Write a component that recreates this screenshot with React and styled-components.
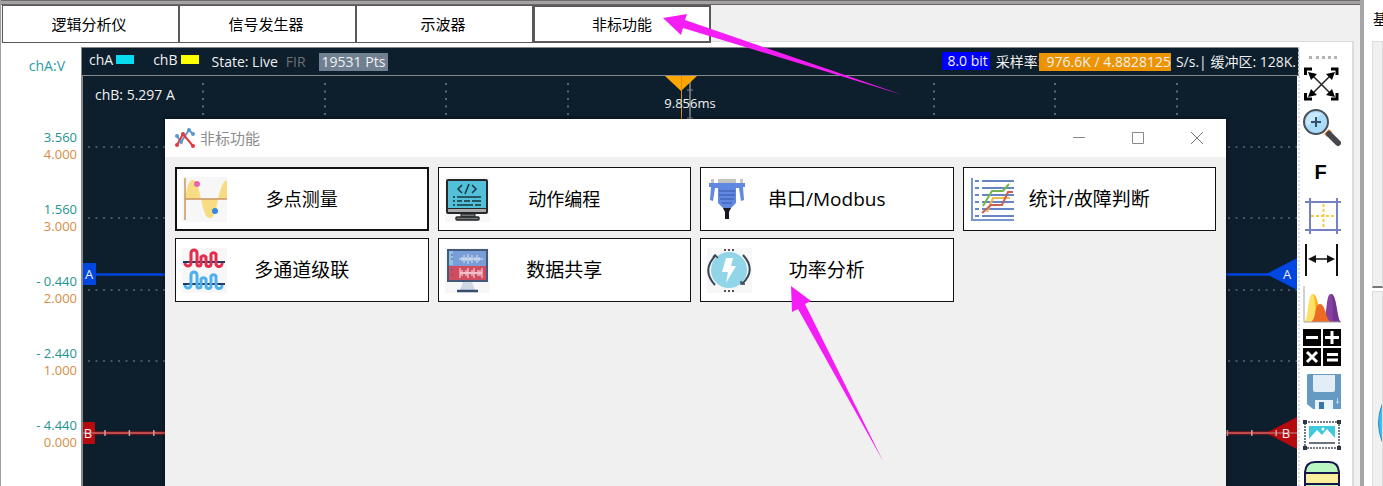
import styled, { createGlobalStyle } from 'styled-components';

const GlobalStyle = createGlobalStyle`
    * {
        box-sizing: border-box;
    }

    body {
        margin: 0;
        overflow: hidden;
        background: #f0f0f0;
        font-family: "Open Sans", "Noto Sans CJK SC", sans-serif;
    }

    button {
        font-family: inherit;
        padding: 0;
        margin: 0;
        border: none;
        background: none;
        color: inherit;
    }

    svg {
        display: block;
    }
`;

const Window = styled.div`
    position: relative;
    display: flex;
    height: 100vh;
    overflow: hidden;
`;

const Main = styled.main`
    flex: 1;
    min-width: 0;
    display: flex;
    flex-direction: column;
    border-left: 1px solid #a0a0a0;
`;

const TopEdge = styled.div`
    height: 5px;
    background: #a3a1a1;
    border-top: 1px solid #6e6c6c;
    border-bottom: 1px solid #696767;
`;

const Tabs = styled.nav`
    position: relative;
    z-index: 1;
    display: flex;
    height: 37px;
    padding-left: 1px;
    margin-right: 6px;
    border-bottom: 1px solid #dcdcdc;
`;

const Tab = styled.button`
    flex: none;
    width: ${({ $active }) => ($active ? 178 : 177)}px;
    height: 38px;
    padding-right: ${({ $active }) => ($active ? 0 : 3)}px;
    border: ${({ $active }) => ($active ? 2 : 1)}px solid #5a5858;
    background: #fff;
    color: #000;
    font-size: 15px;
    line-height: 20px;
`;

const Pane = styled.section`
    flex: 1;
    min-height: 0;
    display: flex;
    margin-right: 6px;
    padding-top: 5px;
    background: #fff;
    border-right: 2px solid #dcdcdc;
`;

const Axis = styled.div`
    width: 80px;
    flex: none;
    padding-right: 4px;
    text-align: right;
`;

const AxisName = styled.div`
    height: 82px;
    padding: 9px 12px 0 0;
    color: #2a9d9d;
    font-size: 14px;
    line-height: 20px;
`;

const AxisMark = styled.div`
    height: 72px;
    font-size: 13px;
    line-height: 17px;
    color: #d68b45;

    span {
        display: block;
        color: #1f9292;
    }
`;

const Scope = styled.div`
    flex: 1;
    min-width: 0;
    display: flex;
    flex-direction: column;
`;

const ScopeHeader = styled.header`
    display: flex;
    align-items: center;
    height: 29px;
    padding: 0 2px 0 7px;
    background: #0d1e2d;
    border: 1px solid #85898c;
    color: #f0f0f0;
    font-size: 14px;
    line-height: 18px;
    white-space: nowrap;
`;

const Channel = styled.span`
    display: flex;
    align-items: center;
    padding-bottom: 4px;
    margin-right: ${({ $last }) => ($last ? 13 : 19)}px;
`;

const Swatch = styled.i`
    width: 18px;
    height: 9px;
    margin: 0 0 1px 3px;
    background: ${({ $color }) => $color};
`;

const State = styled.span`
    margin-right: 8px;
    color: ${({ $dim }) => ($dim ? '#6d7073' : '#f0f0f0')};
`;

const Points = styled.span`
    padding: 0 3px;
    margin-left: 5px;
    background: #708090;
`;

const Rate = styled.div`
    display: flex;
    align-items: center;
    margin-left: auto;
`;

const Bits = styled.span`
    padding: 0 2px 0 5px;
    margin: 0 6px 2px 0;
    background: #0000ff;
`;

const RateValue = styled.span`
    padding: 0 0 0 8px;
    margin: 0 5px 0 -3px;
    background: #eb9400;
`;

const Plot = styled.div`
    flex: 1;
    min-height: 0;
    margin-right: 2px;
    overflow: hidden;
    background: #0d1e2d;
    border-left: 2px solid #85898c;
`;

const Toolbar = styled.div`
    flex: none;
    width: 54px;
    margin-left: -1px;
    padding: 9px 0 0 3px;
    border-left: 2px dotted #dedede;
    display: flex;
    flex-direction: column;
    gap: 6px;
`;

const Grip = styled.div`
    flex: none;
    width: 28px;
    height: 3px;
    margin-left: 6px;
    border-top: 3px dotted #b4b4b4;
`;

const Tool = styled.button`
    flex: none;
    width: 38px;
    height: 38px;
    padding-right: ${({ $text }) => ($text ? 3 : 0)}px;
    color: #000;
    font-size: 20px;
    font-weight: 700;
    font-family: "Liberation Sans", sans-serif;
`;

const Side = styled.aside`
    flex: none;
    width: 23px;
    overflow: hidden;
    background: #fff;
    border-left: 4px solid #a6a6a6;
    display: flex;
    flex-direction: column;
`;

const SideTitle = styled.div`
    flex: none;
    height: 41px;
    padding: 10px 0 0 9px;
    font-size: 14px;
    line-height: 18px;
`;

const SideBox = styled.div`
    flex: none;
    height: 247px;
    margin: 0 0 3px 8px;
    overflow: hidden;
    background: #f0f0f0;
    border: 1px solid #dcdcdc;
    border-bottom: 2px solid #777;
`;

const Dial = styled.div`
    width: 100px;
    height: 100px;
    margin: 81px 0 0 5px;
    border-radius: 50%;
    background: #35c0fa;
    border: 1px solid #3a87a8;
`;

const Dialog = styled.section`
    position: absolute;
    top: 119px;
    left: 165px;
    right: 157px;
    bottom: 0;
    background: #f0f0f0;
    box-shadow: 0 0 5px rgba(0, 0, 0, 0.5);
`;

const TitleBar = styled.header`
    display: flex;
    align-items: center;
    height: 38px;
    padding-left: 10px;
    background: #fff;
`;

const Title = styled.h1`
    flex: 1;
    margin: 0 0 0 5px;
    color: #8c8c8c;
    font-size: 15px;
    line-height: 20px;
    font-weight: 400;
`;

const WindowButton = styled.button`
    display: grid;
    place-items: center;
    width: 59px;
    height: 38px;
`;

const Functions = styled.div`
    display: grid;
    grid-template-columns: repeat(4, 1fr);
    gap: 7px 9px;
    padding: 10px;
`;

const FunctionButton = styled.button`
    display: grid;
    grid-template-columns: 45px 1fr 45px;
    align-items: center;
    height: 64px;
    padding: 0 ${({ $selected }) => ($selected ? 5 : 6)}px;
    background: #fff;
    border: ${({ $selected }) => ($selected ? 2 : 1)}px solid #111;
    color: #000;
    font-size: ${({ $small }) => ($small ? 18 : 19)}px;
    line-height: 26px;
    white-space: nowrap;
`;

const Pointers = styled.svg`
    position: absolute;
    z-index: 2;
    top: 0;
    left: 0;
    pointer-events: none;
`;

const marks = [
    ['3.560', '4.000'],
    ['1.560', '3.000'],
    ['- 0.440', '2.000'],
    ['- 2.440', '1.000'],
    ['- 4.440', '0.000'],
];

const columns = [120, 242, 363, 485, 851, 972, 1094];
const rows = [71, 142, 214, 285];
const ticks = Array.from({ length: 49 }, (_, i) => 22 + i * 24.4);

const Waveforms = () => (
    <svg width="100%" height="410" viewBox="0 0 1214 410" preserveAspectRatio="xMaxYMin slice">
        <g stroke="#5c6973" strokeWidth="2" strokeDasharray="2 5.5">
            {columns.map((x) => (
                <path key={x} d={`M${x} 7V410`} />
            ))}
            {rows.map((y) => (
                <path key={y} d={`M5 ${y}H1214`} strokeWidth="1.5" />
            ))}
        </g>
        <path d="M607 0V410" stroke="#85898c" strokeWidth="1.5" />
        <path d="M604 14H610M604 42H610" stroke="#85898c" />
        <path d="M582 0H614L598 15Z" fill="#ffa500" />
        <path d="M598.500 0V410" stroke="#d98f0c" />
        <path d="M0 198.500H1190" stroke="#0046e0" strokeWidth="2.500" />
        <path d="M0 187H13V209H0Z M1183 198L1214 182V214Z" fill="#0046e0" />
        <path d="M0 357H1190" stroke="#b50b0e" strokeWidth="3" />
        <path d="M0 346H12V368H0Z M1183 357L1214 341V373Z" fill="#b50b0e" />
        <path d="M0 357H1214" stroke="#c98d8f" strokeWidth="1" />
        <path d={ticks.map((x) => `M${x} 354V360`).join('')} stroke="#b9a9ab" strokeWidth="1.5" />
        <g fill="#f0f0f0" fontSize="13">
            <text x="607" y="32" textAnchor="middle">9.856ms</text>
            <text x="12" y="24" fontSize="14">chB: 5.297 A</text>
            <text x="6" y="203" textAnchor="middle">A</text>
            <text x="5" y="362" textAnchor="middle">B</text>
            <text x="1204" y="203" textAnchor="middle">A</text>
            <text x="1203" y="362" textAnchor="middle">B</text>
        </g>
    </svg>
);

const ToolSvg = ({ children }) => (
    <svg width="38" height="38" viewBox="0 0 38 38" fill="none">
        {children}
    </svg>
);

const ExpandIcon = () => (
    <ToolSvg>
        <path d="M2.500 10V4H9M28 4H34V10M34 28V34H28M9 34H2.500V28" stroke="#000" strokeWidth="3" />
        <path d="M8 9L29 30M29 9L8 30" stroke="#222" strokeWidth="1.500" />
        <path d="M5 7L14 9L8 15ZM32 7L23 9L29 15ZM5 32L14 30L8 24ZM32 32L23 30L29 24Z" fill="#000" />
    </ToolSvg>
);

const MagnifierIcon = () => (
    <ToolSvg>
        <path d="M21 25L26 20L29 23L24 28Z" fill="#f58a2c" />
        <path d="M26 25L35 34" stroke="#45454b" strokeWidth="6" strokeLinecap="round" />
        <circle cx="13" cy="13" r="12" fill="#a9dcf8" stroke="#4b5059" strokeWidth="2" />
        <path d="M4 17A10 10 0 0 1 19 5Z" fill="#c9e9fb" />
        <path d="M13 8V18M8 13H18" stroke="#35506a" strokeWidth="2" />
    </ToolSvg>
);

const GridIcon = () => (
    <ToolSvg>
        <path d="M7 1V37M34 1V37M2 5H38M2 33H38" stroke="#7482c4" strokeWidth="2" />
        <path d="M20.500 7V31M8 19H33" stroke="#f0cc45" strokeWidth="2" strokeDasharray="3 2" />
    </ToolSvg>
);

const SpanIcon = () => (
    <ToolSvg>
        <path d="M3 3V35M34 3V35" stroke="#111" strokeWidth="2" />
        <path d="M8 18H30" stroke="#111" strokeWidth="1.500" />
        <path d="M5 18L13 14V22ZM32 18L24 14V22Z" fill="#111" />
    </ToolSvg>
);

const PeaksIcon = () => (
    <ToolSvg>
        <path d="M1 37C6 35 4 9 10 9S16 36 21 37Z" fill="#ffe066" />
        <path d="M10 9C15 9 17 36 21 37H13C12 25 13 15 10 9Z" fill="#fbb315" />
        <path d="M19 37C25 34 22 9 28 9S34 35 38 37Z" fill="#87409f" />
        <path d="M28 9C34 9 33 35 38 37H30C29 25 31 15 28 9Z" fill="#6f3590" />
        <path d="M8 37C14 33 11 19 17 19S22 34 28 37Z" fill="#ee6b25" />
        <path d="M1 1V37H38" stroke="#a4a4a4" />
    </ToolSvg>
);

const MathIcon = () => (
    <ToolSvg>
        <path d="M0 0H18V17H0ZM20 0H38V17H20ZM0 19H18V37H0ZM20 19H38V37H20Z" fill="#050505" />
        <path
            d="M3 8.500H15M22 8.500H36M29 2V15M4 23L14 33M14 23L4 33M24 25.500H35M24 31H35"
            stroke="#fff"
            strokeWidth="3"
        />
    </ToolSvg>
);

const SaveIcon = () => (
    <ToolSvg>
        <path d="M5 1H38V36H10L4 31V2Z" fill="#659bc3" />
        <path d="M10 2H32V17Q32 19 30 19H12Q10 19 10 17Z" fill="#e2edf5" />
        <path d="M12 27H30V36H12Z" fill="#eaf3fb" />
        <path d="M16 29H21V36H16Z" fill="#3774a7" />
        <path d="M34.500 25V31M33 29H36" stroke="#c1d9e9" />
    </ToolSvg>
);

const PictureIcon = () => (
    <ToolSvg>
        <rect x="2" y="5" width="34" height="26" stroke="#49505b" strokeWidth="1.500" strokeDasharray="2 1" />
        <path d="M0 3H4V7H0ZM34 3H38V7H34ZM0 29H4V33H0ZM34 29H38V33H34Z" fill="#2d3644" />
        <path d="M6 9H32V22H6Z" fill="#3fc9de" />
        <path d="M6 22L14 13L19 18L24 12L32 21V23H6Z" fill="#fff" />
        <circle cx="20" cy="12" r="1.500" fill="#fff" />
        <path d="M6 26H32" stroke="#6b747c" strokeWidth="2" />
    </ToolSvg>
);

const LayersIcon = () => (
    <ToolSvg>
        <path d="M2 38V11Q3 1 12 1H26Q35 1 36 11V38Z" fill="#b9f7c1" />
        <path d="M2 12H36V23H2Z" fill="#f9ee9b" />
        <path d="M2 38V11Q3 1 12 1H26Q35 1 36 11V38M2 12H36M2 23H36" stroke="#14154b" strokeWidth="2" />
    </ToolSvg>
);

const FuncSvg = ({ plain, children }) => (
    <svg width="45" height="45" viewBox="0 0 45 45" fill="none">
        {!plain && <path d="M0 0H45V45H0Z" fill="#f7f7f7" />}
        {children}
    </svg>
);

const MeasureIcon = () => (
    <FuncSvg>
        <path
            d="M3 22C5 9 7 3 11 3S17 12 19 22C22 36 24 41 28 41S34 34 36 22C39 10 41 4 45 3V22Z"
            fill="#f8dc83"
        />
        <path d="M3 1V43M3 22H45" stroke="#cc9560" strokeWidth="1.500" />
        <circle cx="15" cy="7" r="3" fill="#ee62ad" />
        <circle cx="33" cy="34" r="3" fill="#3688df" />
    </FuncSvg>
);

const CodeIcon = () => (
    <FuncSvg>
        <rect x="2" y="3" width="40" height="33" rx="1" fill="#52c0d9" stroke="#25282a" strokeWidth="2" />
        <path d="M3 32H41V35H3Z" fill="#aaa" />
        <path d="M3 31.500H41" stroke="#25282a" />
        <path d="M17 8L13 12L17 16M27 8L31 12L27 16M24 7L20 17" stroke="#17353e" strokeWidth="1.500" />
        <path
            d="M8 20H10M12 20H36M8 24H10M12 24H17M19 24H25M27 24H36M8 28H10M12 28H28M30 28H36"
            stroke="#17353e"
            strokeWidth="1.500"
        />
        <path d="M16 37H30V40H16Z" fill="#777" stroke="#25282a" />
        <rect x="11" y="40" width="23" height="3" rx="1" fill="#777" stroke="#25282a" strokeWidth="1.500" />
    </FuncSvg>
);

const SerialIcon = () => (
    <FuncSvg plain>
        <path d="M11 2H29V6H11ZM4 2H7V6H4ZM33 2H36V6H33Z" fill="#c3c5c2" />
        <path d="M2 6H38V10H36L37 23L34 24L32 11H29V26L23 32H17L11 26V11H8L6 24L3 23L4 10H2Z" fill="#6088e0" />
        <path d="M12 14H28M12 18H28M13 22H27M15 26H25" stroke="#4668b6" strokeWidth="1.500" />
        <path d="M16 31H24L22 35V42H18V35Z" fill="#17191e" />
    </FuncSvg>
);

const StatsIcon = () => (
    <FuncSvg plain>
        <path d="M2 1V43H44" stroke="#7896cf" strokeWidth="2" />
        <path
            d="M5 4H9M12 4H44M5 11H9M12 11H44M5 18H9M12 18H44M5 25H9M12 25H44M5 32H9M12 32H44M5 39H9M12 39H44"
            stroke="#6785c5"
            strokeWidth="2"
        />
        <path d="M13 29L22 14H33L39 7" stroke="#74b54b" strokeWidth="2" />
        <path d="M17 35L23 21H40" stroke="#eebb4b" strokeWidth="2" />
        <path d="M12 36L21 28H32L38 15H43" stroke="#c96058" strokeWidth="2" />
    </FuncSvg>
);

const wave = 'M3 15A3 3 0 0 0 9 15V5A3 3 0 0 1 15 5V16A2 2 0 0 0 19 16V9A3 3 0 0 1 24 9V16A2 2 0 0 0 29 16V6A3 3 0 0 1 34 6V16A3 3 0 0 0 40 15';

const CascadeIcon = () => (
    <FuncSvg>
        <path d="M1 14H43M1 36H43" stroke="#243a60" strokeWidth="2" />
        <path d={wave} stroke="#e22d4d" strokeWidth="3" />
        <path d={wave} transform="translate(0 22)" stroke="#4eafee" strokeWidth="3" />
    </FuncSvg>
);

const ShareIcon = () => (
    <FuncSvg>
        <path d="M18 34H27L30 42H15Z" fill="#ced8e5" />
        <path d="M3 2H42V18H3Z" fill="#789dd7" />
        <path d="M3 18H42V34H3Z" fill="#d04d60" />
        <path d="M3 3H8V17H3Z" fill="#8fc0e6" />
        <rect x="3" y="2" width="39" height="31" stroke="#465979" strokeWidth="2" />
        <path d="M14 11H38M17 9V13M19 7V15M21 9V13M23 6V16M25 9V13M27 7V15M30 9V13M32 7V15M34 9V13" stroke="#dce6f5" />
        <path d="M15 20V30M17 22V28M19 24V26M21 22V28M23 20V30M25 24V26M27 22V28M29 20V30M31 24V26M33 22V28M35 22V28M37 20V30" stroke="#fbe9ed" />
        <path d="M15 25H37" stroke="#fbe9ed" />
        <path d="M7 6V8M7 10V12M7 21V23M7 26V28" stroke="#49628c" />
        <path d="M12 43H33" stroke="#374d70" strokeWidth="2.500" />
    </FuncSvg>
);

const PowerIcon = () => (
    <FuncSvg>
        <circle cx="22" cy="22" r="18" fill="#91d5e8" />
        <path d="M9 7Q-6 22 8 37M36 7Q50 22 35 36" stroke="#3a4657" strokeWidth="2" />
        <path d="M6 9L8 7L11 10M34 33V36H38" stroke="#3a4657" strokeWidth="1.500" />
        <path d="M17 2H27M17 43H27" stroke="#555" strokeWidth="2" strokeDasharray="2 2" />
        <path d="M19 10H26L24 18H29L19 35L21 24H15Z" fill="#fff" />
    </FuncSvg>
);

const AppIcon = () => (
    <svg width="20" height="20" viewBox="0 0 20 20" fill="none">
        <path d="M2 8L6 14L14 2L18 6" stroke="#5a97cb" strokeWidth="2" />
        <path d="M2 17L8 6L18 18" stroke="#e0393e" strokeWidth="2" />
        <g fill="#5a97cb">
            <circle cx="2" cy="8" r="2" />
            <circle cx="6" cy="14" r="2" />
            <circle cx="14" cy="2" r="2" />
            <circle cx="18" cy="6" r="2" />
        </g>
        <g fill="#e0393e">
            <circle cx="2" cy="17" r="2" />
            <circle cx="8" cy="6" r="2" />
            <circle cx="18" cy="18" r="2" />
        </g>
    </svg>
);

const tools = [
    ['缩放', <ExpandIcon />],
    ['放大', <MagnifierIcon />],
    ['F', 'F'],
    ['网格', <GridIcon />],
    ['间距', <SpanIcon />],
    ['频谱', <PeaksIcon />],
    ['运算', <MathIcon />],
    ['保存', <SaveIcon />],
    ['图片', <PictureIcon />],
    ['图层', <LayersIcon />],
];

const functions = [
    { label: '多点测量', icon: <MeasureIcon />, small: true, selected: true },
    { label: '动作编程', icon: <CodeIcon />, small: true },
    { label: '串口/Modbus', icon: <SerialIcon /> },
    { label: '统计/故障判断', icon: <StatsIcon /> },
    { label: '多通道级联', icon: <CascadeIcon /> },
    { label: '数据共享', icon: <ShareIcon /> },
    { label: '功率分析', icon: <PowerIcon /> },
];

const FunctionDialog = () => (
    <Dialog role="dialog" aria-labelledby="dialog-title">
        <TitleBar>
            <AppIcon />
            <Title id="dialog-title">非标功能</Title>
            <WindowButton aria-label="最小化">
                <svg width="12" height="12" stroke="#888"><path d="M0 5.500H12" /></svg>
            </WindowButton>
            <WindowButton aria-label="最大化">
                <svg width="12" height="12" stroke="#888" fill="none"><path d="M.5 .5H11.500V11.500H.5Z" /></svg>
            </WindowButton>
            <WindowButton aria-label="关闭">
                <svg width="12" height="12" stroke="#777"><path d="M0 0L12 12M12 0L0 12" /></svg>
            </WindowButton>
        </TitleBar>
        <Functions>
            {functions.map(({ label, icon, small, selected }) => (
                <FunctionButton key={label} $small={small} $selected={selected}>
                    {icon}
                    <span>{label}</span>
                </FunctionButton>
            ))}
        </Functions>
    </Dialog>
);

const App = () => (
    <>
        <GlobalStyle />
        <Window>
            <Main>
                <TopEdge />
                <Tabs>
                    <Tab>逻辑分析仪</Tab>
                    <Tab>信号发生器</Tab>
                    <Tab>示波器</Tab>
                    <Tab $active>非标功能</Tab>
                </Tabs>
                <Pane>
                    <Axis>
                        <AxisName>chA:V</AxisName>
                        {marks.map(([a, b]) => (
                            <AxisMark key={a}>
                                <span>{a}</span>
                                {b}
                            </AxisMark>
                        ))}
                    </Axis>
                    <Scope>
                        <ScopeHeader>
                            <Channel>chA<Swatch $color="#08dcf0" /></Channel>
                            <Channel $last>chB<Swatch $color="#ffff00" /></Channel>
                            <State>State: Live</State>
                            <State $dim>FIR</State>
                            <Points>19531 Pts</Points>
                            <Rate>
                                <Bits>8.0 bit</Bits>
                                采样率:
                                <RateValue>976.6K / 4.8828125</RateValue>
                                S/s.
                                <span>| 缓冲区: 128K.</span>
                            </Rate>
                        </ScopeHeader>
                        <Plot>
                            <Waveforms />
                        </Plot>
                    </Scope>
                    <Toolbar>
                        <Grip />
                        {tools.map(([label, icon]) => (
                            <Tool key={label} aria-label={label} $text={label === icon}>{icon}</Tool>
                        ))}
                    </Toolbar>
                </Pane>
            </Main>
            <Side>
                <SideTitle>基</SideTitle>
                <SideBox />
                <SideBox>
                    <Dial />
                </SideBox>
            </Side>
            <FunctionDialog />
            <Pointers width="1383" height="486" fill="#f51df5">
                <path d="M663 18L687 14L685 20L903 95L683 28L681 35Z" />
                <path d="M791 286L811 301L805 304L883 461L798 309L792 312Z" />
            </Pointers>
        </Window>
    </>
);

export default App;
